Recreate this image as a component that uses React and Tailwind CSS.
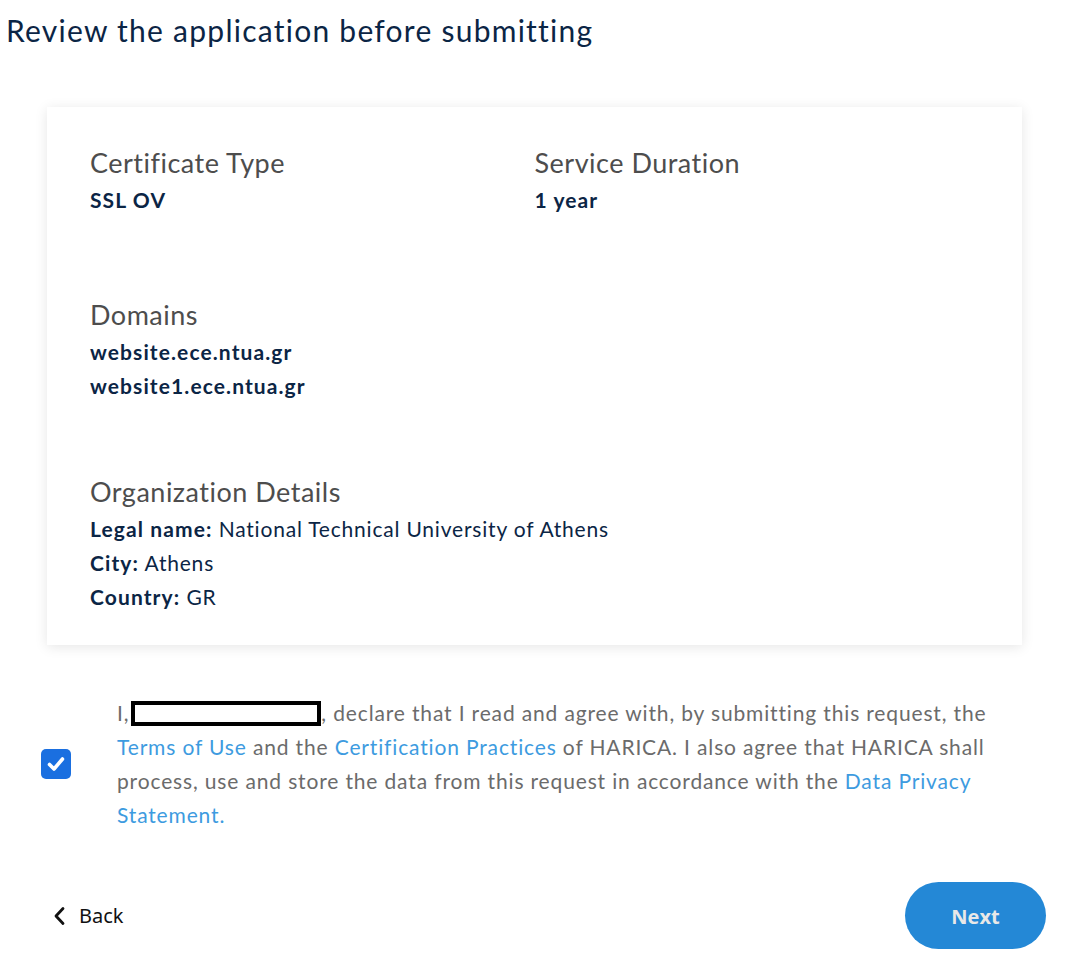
import React from "react";

function Section({ title, children, className = "" }) {
  return (
    <div className={className}>
      <div className="text-[27px] leading-[31px] tracking-[0.5px] text-[#4d4d4d]">{title}</div>
      <div className="mt-[5px] text-[21px] leading-[34px] tracking-[0.8px] text-[#0b2545]">{children}</div>
    </div>
  );
}

export default function App() {
  return (
    <div className="w-[1078px] min-h-[972px] bg-white font-['Lato','Noto_Sans',sans-serif]">
      <h1 className="pl-[6px] pt-[12px] text-[30px] leading-[36px] tracking-[1.25px] text-[#0b2545] font-normal">
        Review the application before submitting
      </h1>

      <div className="ml-[47px] mt-[59px] w-[975px] bg-white shadow-[0_2px_12px_rgba(0,0,0,0.10)] pl-[43px] pr-[43px] pt-[40px] pb-[31px]">
        <div className="grid grid-cols-2">
          <Section title="Certificate Type">
            <span className="font-bold tracking-[1.1px]">SSL OV</span>
          </Section>
          <Section title="Service Duration">
            <span className="font-bold tracking-[1.1px]">1 year</span>
          </Section>
        </div>

        <Section title="Domains" className="mt-[82px]">
          <div className="font-bold tracking-[1.1px]">website.ece.ntua.gr</div>
          <div className="font-bold tracking-[1.1px]">website1.ece.ntua.gr</div>
        </Section>

        <Section title="Organization Details" className="mt-[73px]">
          <div>
            <span className="font-bold tracking-[1.1px]">Legal name:</span> National Technical University of Athens
          </div>
          <div>
            <span className="font-bold tracking-[1.1px]">City:</span> Athens
          </div>
          <div>
            <span className="font-bold tracking-[1.1px]">Country:</span> GR
          </div>
        </Section>
      </div>

      <div className="mt-[51px] flex items-center">
        <div className="ml-[41px] w-[30px] h-[30px] shrink-0 rounded-[5px] bg-[#1a6fe0] flex items-center justify-center">
          <svg width="22" height="22" viewBox="0 0 22 22" fill="none">
            <path d="M4.5 11.5l4.5 4.5 8.5-10" stroke="white" strokeWidth="3.6" strokeLinecap="round" strokeLinejoin="round" />
          </svg>
        </div>
        <p className="ml-[46px] w-[900px] text-[21px] leading-[34px] tracking-[0.85px] text-[#6b6b6b]">
          I,
          <span className="inline-block align-middle ml-[2px] w-[190px] h-[25px] border-[4px] border-black bg-white -mt-[4px]" />
          , declare that I read and agree with, by submitting this request, the{" "}
          <span className="text-[#3d9be0]">Terms of Use</span> and the{" "}
          <span className="text-[#3d9be0]">Certification Practices</span> of HARICA. I also agree that HARICA shall
          process, use and store the data from this request in accordance with the{" "}
          <span className="text-[#3d9be0]">Data Privacy Statement.</span>
        </p>
      </div>

      <div className="mt-[50px] flex items-center justify-between pr-[32px]">
        <div className="ml-[53px] flex items-center gap-[13px] font-['Noto_Sans','Open_Sans',sans-serif] text-[20px] text-[#111]">
          <svg width="13" height="20" viewBox="0 0 13 20" fill="none">
            <path d="M10 2.5L3 10l7 7.5" stroke="#111" strokeWidth="2.8" strokeLinecap="round" strokeLinejoin="round" />
          </svg>
          <span>Back</span>
        </div>
        <button className="w-[141px] h-[67px] rounded-full bg-[#2488d6] text-[#e8e8e8] text-[20px] font-bold font-['Open_Sans','Noto_Sans',sans-serif] pt-[2px]">
          Next
        </button>
      </div>
    </div>
  );
}
